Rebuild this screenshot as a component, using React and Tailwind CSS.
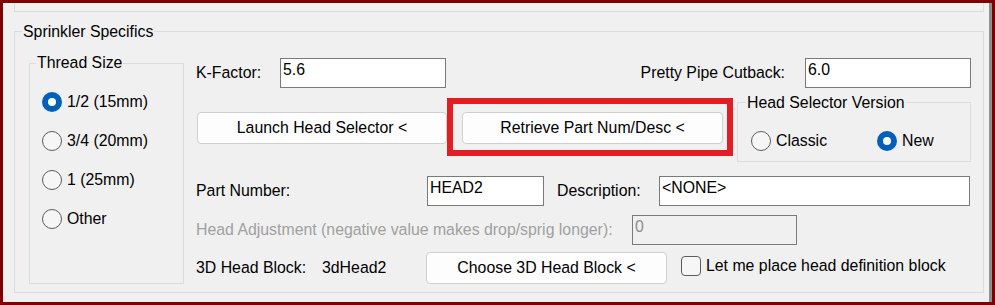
import React from "react";

function Radio({ checked, label, className = "" }) {
  return (
    <div className={"flex h-[20px] items-center " + className}>
      {checked ? (
        <span className="flex h-[20px] w-[20px] shrink-0 items-center justify-center rounded-full bg-[#005fb8]">
          <span className="h-[8px] w-[8px] rounded-full bg-white" />
        </span>
      ) : (
        <span className="h-[20px] w-[20px] shrink-0 rounded-full border border-[#5c5c5c] bg-[#f6f6f6]" />
      )}
      <span className="ml-[5px] whitespace-nowrap leading-[20px]">{label}</span>
    </div>
  );
}

function Legend({ children, className = "" }) {
  return (
    <div className={"w-fit bg-[#f0f0f0] px-[1px] leading-[20px] whitespace-nowrap " + className}>
      {children}
    </div>
  );
}

function Input({ value, className = "", disabled = false }) {
  return (
    <div
      className={
        "h-[30px] border border-[#7a7a7a] pl-[2px] pt-[2px] leading-[18px] " +
        (disabled ? "bg-[#f0f0f0] text-[#8c8c8c] " : "bg-white text-black ") +
        className
      }
    >
      {value}
    </div>
  );
}

function Button({ children, className = "" }) {
  return (
    <div
      className={
        "flex h-[32px] items-center justify-center rounded-[4px] border border-[#d0d0d0] bg-[#fdfdfd] leading-[20px] whitespace-nowrap " +
        className
      }
    >
      {children}
    </div>
  );
}

export default function App() {
  return (
    <div className="h-[305px] w-[995px] overflow-hidden border-[3px] border-[#7f0000] bg-[#f0f0f0] font-['Liberation_Sans',Arial,sans-serif] text-[15.85px] text-black">
      <div className="h-full w-full border-r-[3px] border-[#8e8e8e]">
        {/* previous group box remnant */}
        <div className="ml-[11px] h-[9px] w-[970px] border-x border-b border-[#dcdcdc]" />

        {/* Sprinkler Specifics */}
        <div className="ml-[11px] mt-[19px] h-[262px] w-[970px] border border-[#dcdcdc]">
          <Legend className="-mt-[10px] ml-[7px]">Sprinkler Specifics</Legend>

          <div className="flex items-start">
            {/* Thread Size */}
            <div className="ml-[14px] mt-[21px] h-[221px] w-[155px] shrink-0 border border-[#dcdcdc]">
              <Legend className="-mt-[11px] ml-[6px]">Thread Size</Legend>
              <div className="mt-[19px] flex flex-col gap-[19px] pl-[12px]">
                <Radio checked label="1/2 (15mm)" />
                <Radio label="3/4 (20mm)" />
                <Radio label="1 (25mm)" />
                <Radio label="Other" />
              </div>
            </div>

            {/* Right column */}
            <div className="ml-[12px] mt-[16px] flex w-[775px] shrink-0 flex-col">
              {/* Row 1 */}
              <div className="flex h-[30px] items-center">
                <span className="w-[84px] leading-[20px]">K-Factor:</span>
                <Input value="5.6" className="w-[166px]" />
                <span className="flex-1" />
                <span className="leading-[20px]">Pretty Pipe Cutback:</span>
                <Input value="6.0" className="ml-[20px] w-[166px]" />
              </div>

              {/* Row 2 */}
              <div className="flex h-[74px] items-start">
                <Button className="ml-[1px] mt-[24px] w-[250px]">Launch Head Selector &lt;</Button>
                <div className="mt-[10px] h-[58px] w-[286px] shrink-0 border-[6px] border-[#e31d24]">
                  <Button className="ml-[9px] mt-[8px] w-[261px]">Retrieve Part Num/Desc &lt;</Button>
                </div>
                <div className="ml-[4px] mt-[14px] h-[60px] w-[234px] shrink-0 border border-[#dcdcdc]">
                  <Legend className="-mt-[10px] ml-[8px]">Head Selector Version</Legend>
                  <div className="mt-[18px] flex pl-[13px]">
                    <Radio label="Classic" className="w-[126px]" />
                    <Radio checked label="New" />
                  </div>
                </div>
              </div>

              {/* Row 3 */}
              <div className="mt-[14px] flex h-[30px] items-center">
                <span className="w-[231px] shrink-0 leading-[20px]">Part Number:</span>
                <Input value="HEAD2" className="w-[117px] shrink-0" />
                <span className="ml-[13px] w-[102px] shrink-0 leading-[20px]">Description:</span>
                <Input value="<NONE>" className="w-[311px] shrink-0" />
              </div>

              {/* Row 4 */}
              <div className="mt-[9px] flex h-[30px] items-center">
                <span className="w-[436px] shrink-0 whitespace-nowrap leading-[20px] text-[#a0a0a0]">
                  Head Adjustment (negative value makes drop/sprig longer):
                </span>
                <Input value="0" disabled className="w-[165px] shrink-0" />
              </div>

              {/* Row 5 */}
              <div className="mt-[7px] flex h-[32px] items-center">
                <span className="w-[126px] shrink-0 leading-[20px]">3D Head Block:</span>
                <span className="w-[104px] shrink-0 leading-[20px]">3dHead2</span>
                <Button className="w-[241px] shrink-0">Choose 3D Head Block &lt;</Button>
                <div className="-mt-[4px] ml-[14px] flex items-center">
                  <span className="h-[20px] w-[20px] shrink-0 rounded-[4px] border border-[#5c5c5c] bg-[#f6f6f6]" />
                  <span className="ml-[5px] whitespace-nowrap leading-[20px]">Let me place head definition block</span>
                </div>
              </div>
            </div>
          </div>
        </div>
      </div>
    </div>
  );
}
